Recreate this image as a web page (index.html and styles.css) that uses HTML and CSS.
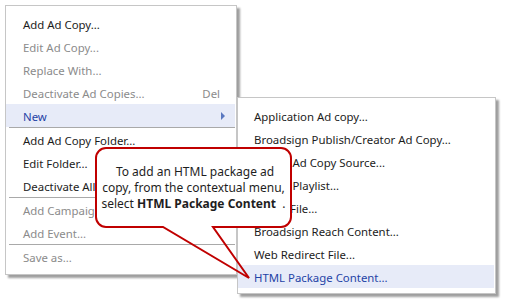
FILE: index.html
```html
<!DOCTYPE html>
<html lang="en">
<head>
    <meta charset="UTF-8">
    <meta name="viewport" content="width=device-width, initial-scale=1.0">
    <title>New HTML Package Content</title>
    <link rel="stylesheet" href="styles.css">
</head>
<body>
    <div class="stage">
        <div class="menu main-menu">
            <div class="item">Add Ad Copy...</div>
            <div class="item disabled">Edit Ad Copy...</div>
            <div class="item disabled">Replace With...</div>
            <div class="item disabled"><span>Deactivate Ad Copies...</span><span class="shortcut">Del</span></div>
            <div class="item active"><span>New</span><span class="arrow"></span></div>
            <div class="separator"></div>
            <div class="item">Add Ad Copy Folder...</div>
            <div class="item">Edit Folder...</div>
            <div class="item">Deactivate All</div>
            <div class="separator"></div>
            <div class="item disabled">Add Campaign...</div>
            <div class="item disabled">Add Event...</div>
            <div class="separator"></div>
            <div class="item disabled">Save as...</div>
        </div>

        <div class="menu sub-menu">
            <div class="item">Application Ad copy...</div>
            <div class="item">Broadsign Publish/Creator Ad Copy...</div>
            <div class="item">Linked Ad Copy Source...</div>
            <div class="item">Linked Playlist...</div>
            <div class="item">Media File...</div>
            <div class="item">Broadsign Reach Content...</div>
            <div class="item">Web Redirect File...</div>
            <div class="item active">HTML Package Content...</div>
        </div>

        <svg class="callout-shape" width="505" height="300" viewBox="0 0 505 300">
            <rect x="96" y="148" width="195" height="79" rx="10" fill="#fff"/>
            <path d="M163 227 H106 A10 10 0 0 1 96 217 V158 A10 10 0 0 1 106 148 H281 A10 10 0 0 1 291 158 V217 A10 10 0 0 1 281 227 H213 L249 278 Z"
                  fill="none" stroke="#c00000" stroke-width="2" stroke-linejoin="miter"/>
        </svg>
        <div class="callout-text">
            <p>&nbsp;To add an HTML package ad<br>
            copy, from the contextual menu,<br>
            select <b>HTML Package Content</b>&nbsp; .</p>
        </div>
    </div>
</body>
</html>
```

FILE: styles.css
```css
body {
    margin: 0;
    background: #fff;
    font-family: "Noto Sans", "Open Sans", sans-serif;
    font-size: 11.4px;
    color: #1c1c1c;
}

.stage {
    position: relative;
    width: 505px;
    height: 300px;
    padding: 5px;
    box-sizing: border-box;
    overflow: hidden;
}

.menu {
    background: #fff;
    border: 1px solid #c6c6c6;
    box-sizing: border-box;
    box-shadow: 3px 3px 2px rgba(0, 0, 0, 0.38);
}

.main-menu {
    width: 232px;
    padding: 6px 1px 6px 0;
}

.sub-menu {
    position: absolute;
    left: 237px;
    top: 97px;
    width: 259px;
    padding: 6px 1px 5px 0;
}

.item {
    display: flex;
    justify-content: space-between;
    align-items: center;
    height: 23px;
    padding: 1px 14px 0 17px;
    box-sizing: border-box;
    white-space: nowrap;
}

.sub-menu .item {
    padding-left: 16px;
}

.item.disabled {
    color: #8b8b8b;
}

.item.active {
    background: #e7ebf8;
    color: #1f43a6;
}

.shortcut {
    padding-right: 1px;
}

.arrow {
    width: 0;
    height: 0;
    margin-right: -4px;
    border-left: 4px solid #5a78c0;
    border-top: 4px solid transparent;
    border-bottom: 4px solid transparent;
}

.separator {
    height: 1px;
    margin-left: 3px;
    background: #a9a9a9;
}

.callout-shape {
    position: absolute;
    left: 0;
    top: 0;
}

.callout-text {
    position: absolute;
    left: 96px;
    top: 149px;
    width: 195px;
    height: 78px;
    display: flex;
    align-items: center;
    justify-content: center;
    text-align: center;
    line-height: 16px;
    font-size: 12px;
    color: #1e1e1e;
}

.callout-text p {
    margin: 0;
    white-space: nowrap;
}
```
